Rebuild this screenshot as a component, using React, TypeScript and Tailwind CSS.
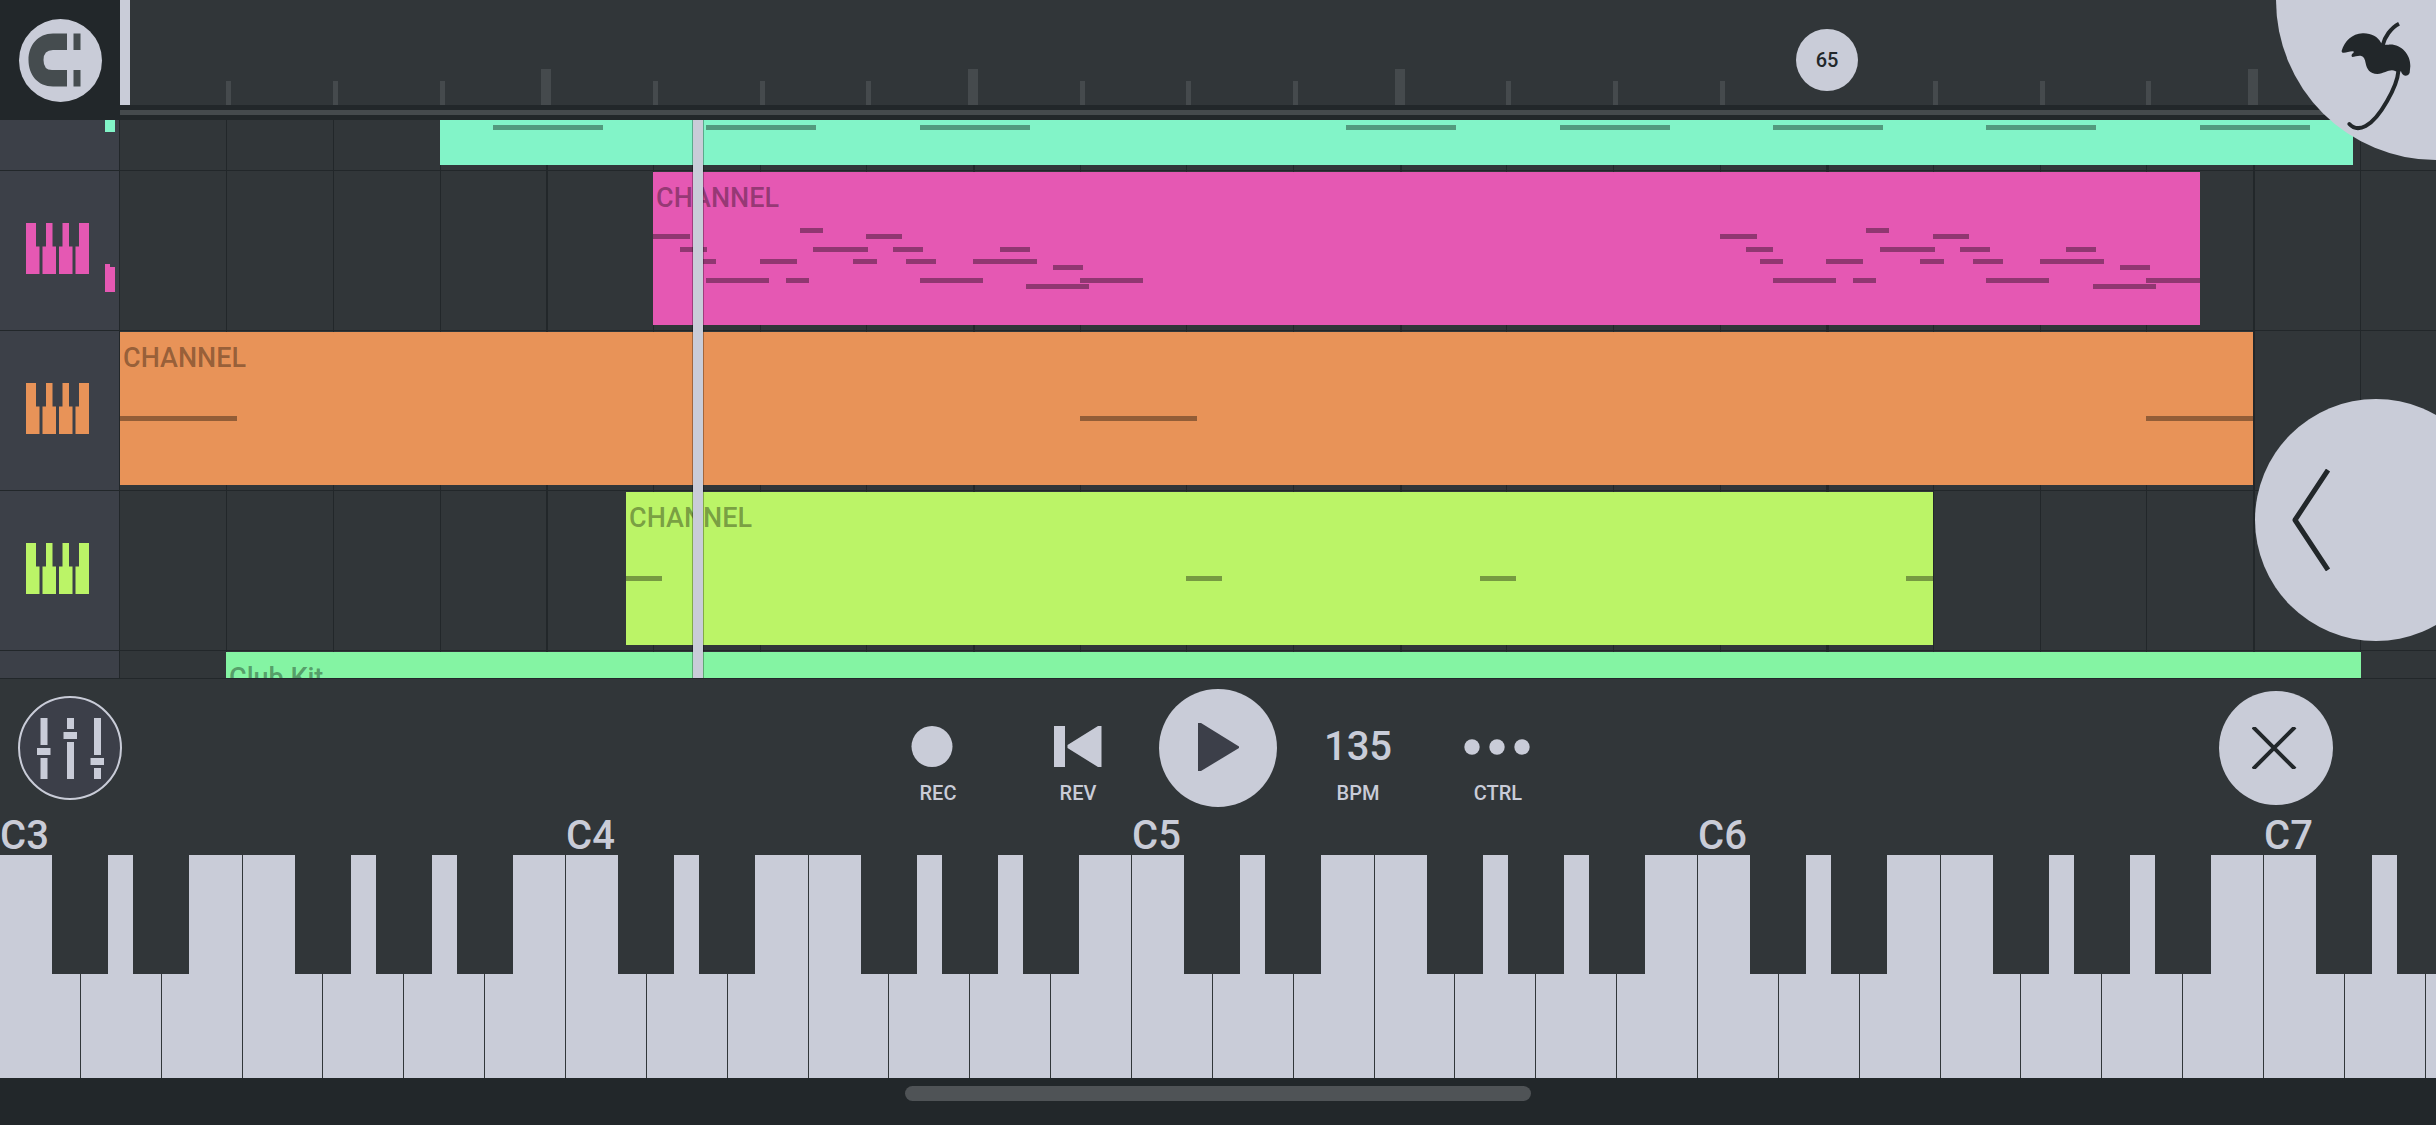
import type React from "react";
import { useState } from "react";

interface Note {
  start: number;
  length: number;
  y: number;
}

interface Clip {
  start: number;
  length: number;
  color: string;
  label?: string;
  notes: Note[];
}

interface Meter {
  left: number;
  right: number;
}

interface Track {
  id: string;
  name: string;
  iconColor?: string;
  meterColor?: string;
  meter?: Meter;
  clip: Clip;
}

// One bar is 16 steps, all clip and note times are in steps
const BAR_WIDTH = 106.67;
const BARS = 24;
const LOOP_END = 16;

const toPx = (steps: number) => Math.floor((steps / 16) * BAR_WIDTH);

const riff: Note[] = [
  { start: 0, length: 5.6, y: 62 },
  { start: 4, length: 4.1, y: 75 },
  { start: 6, length: 3.5, y: 87 },
  { start: 8, length: 9.5, y: 106 },
  { start: 16, length: 5.6, y: 87 },
  { start: 20, length: 3.5, y: 106 },
  { start: 22, length: 3.5, y: 56 },
  { start: 24, length: 8.3, y: 75 },
  { start: 30, length: 3.6, y: 87 },
  { start: 32, length: 5.5, y: 62 },
  { start: 36, length: 4.5, y: 75 },
  { start: 38, length: 4.5, y: 87 },
  { start: 40, length: 9.5, y: 106 },
  { start: 48, length: 9.6, y: 87 },
  { start: 52, length: 4.5, y: 75 },
  { start: 56, length: 9.5, y: 112 },
  { start: 60, length: 4.5, y: 93 },
  { start: 64, length: 9.5, y: 106 },
];

const tracks: Track[] = [
  {
    id: "lead",
    name: "Lead",
    meterColor: "bg-[#82f4c8]",
    meter: { left: 122, right: 122 },
    clip: {
      start: 48,
      length: 287,
      color: "bg-[#82f4c8]",
      notes: [8, 40, 72, 136, 168, 200, 232, 264].map((start) => ({
        start,
        length: 16.5,
        y: 113,
      })),
    },
  },
  {
    id: "pink",
    name: "Channel 1",
    iconColor: "text-[#e558b3]",
    meterColor: "bg-[#e558b3]",
    meter: { left: 28, right: 25 },
    clip: {
      start: 80,
      length: 232,
      color: "bg-[#e558b3]",
      label: "CHANNEL",
      notes: [
        ...riff,
        ...riff.map((note) => ({ ...note, start: note.start + 160 })),
      ],
    },
  },
  {
    id: "orange",
    name: "Channel 2",
    iconColor: "text-[#e89358]",
    clip: {
      start: 0,
      length: 320,
      color: "bg-[#e89358]",
      label: "CHANNEL",
      notes: [
        { start: 0, length: 17.6, y: 84 },
        { start: 144, length: 17.6, y: 84 },
        { start: 304, length: 17.6, y: 84 },
      ],
    },
  },
  {
    id: "lime",
    name: "Channel 3",
    iconColor: "text-[#bbf467]",
    clip: {
      start: 76,
      length: 196,
      color: "bg-[#bbf467]",
      label: "CHANNEL",
      notes: [
        { start: 0, length: 5.5, y: 84 },
        { start: 84, length: 5.5, y: 84 },
        { start: 128, length: 5.5, y: 84 },
        { start: 192, length: 5.5, y: 84 },
      ],
    },
  },
  {
    id: "club-kit",
    name: "Club Kit",
    clip: {
      start: 16,
      length: 320.2,
      color: "bg-[#84f4a3]",
      label: "Club Kit",
      notes: [],
    },
  },
];

const MagnetIcon = () => (
  <svg width="83" height="83" viewBox="0 0 83 83" fill="#454c4f">
    <path d="M48 14.5V31H34Q24.5 31 24.5 41Q24.5 51 33 51H48V67.5H34C19 67.5 9.5 56 9.5 41C9.5 26 19 14.5 34 14.5Z" />
    <rect x="54.5" y="14.5" width="7" height="16.5" />
    <rect x="54.5" y="51" width="7" height="16.5" />
  </svg>
);

const FruitIcon = () => (
  <svg width="100" height="130" viewBox="0 0 300 390">
    <path
      fill="#22272a"
      d="M35 122C44 94 66 71 98 70C123 69 143 80 153 98C158 104 166 105 176 104C212 101 242 133 241 168L239 188Q236 197 226 197Q216 196 213 184Q204 188 197 184C181 174 166 190 142 192C119 192 110 177 107 160C105 147 101 139 94 138C84 136 76 141 66 141Q63 136 66 132Q76 125 68 124C56 124 46 130 38 128Q34 126 35 122Z"
    />
    <path
      fill="none"
      stroke="#22272a"
      strokeWidth="12"
      d="M158 106C163 82 183 53 207 41"
    />
    <path
      fill="none"
      stroke="#22272a"
      strokeWidth="12"
      strokeLinecap="round"
      d="M205 184C202 226 151 325 107 348C88 358 70 355 58 342"
    />
  </svg>
);

const PianoIcon = () => (
  <svg width="63" height="51" viewBox="0 0 63 51" fill="currentColor">
    <path d="M0 0H10V23.5H13.5V51H0Z" />
    <path d="M20 0H26.5V23.5H30V51H16.5V23.5H20Z" />
    <path d="M36.5 0H43V23.5H46.5V51H33V23.5H36.5Z" />
    <path d="M53 0H63V51H49.5V23.5H53Z" />
  </svg>
);

const MixerIcon = () => (
  <svg width="67" height="61" viewBox="0 0 67 61" fill="currentColor">
    <path d="M3.500 0h7v27h-7zM0 30h13.5v7H0zM3.500 40h7v21h-7z" />
    <path d="M30 0h7v11h-7zM26.500 14h13.5v7h-13.5zM30 24h7v37h-7z" />
    <path d="M57 0h7v37h-7zM53.500 40h13.5v7h-13.5zM57 50h7v11h-7z" />
  </svg>
);

const PlayIcon = () => (
  <svg width="42" height="52" viewBox="0 0 42 52" fill="#3c3f49">
    <path d="M1 1H4L42 24.5V26L4 49H1Z" />
  </svg>
);

const RecIcon = () => (
  <svg width="54" height="42" viewBox="0 0 54 42" fill="currentColor">
    <circle cx="21" cy="20.5" r="20.5" />
  </svg>
);

const RewindIcon = () => (
  <svg width="48" height="42" viewBox="0 0 48 42" fill="currentColor">
    <path d="M0 0H11V41H0ZM44 0H47.5V41H44L13.5 22V19Z" />
  </svg>
);

const DotsIcon = () => (
  <svg width="68" height="16" viewBox="0 0 68 16" fill="currentColor">
    <circle cx="8" cy="8" r="7.7" />
    <circle cx="33" cy="8" r="7.7" />
    <circle cx="58" cy="8" r="7.7" />
  </svg>
);

const Ruler = () => (
  <div className="flex-1 min-w-0">
    <div className="relative h-[105px] bg-[#313639] overflow-hidden">
      {Array.from({ length: BARS - 1 }, (_, i) => i + 1)
        .filter((bar) => bar !== LOOP_END)
        .map((bar) => (
          <span
            key={bar}
            className={`absolute bottom-0 bg-[#454a4d] ${
              bar % 4 === 0 ? "w-2.5 h-9 -ml-[5px]" : "w-[5px] h-6"
            }`}
            style={{ left: toPx(bar * 16) }}
          />
        ))}
      <span className="absolute left-0 top-0 w-2.5 h-full bg-[#c9ccd8]" />
      {/* Loop end marker */}
      <span
        className="absolute top-[29px] w-[62px] h-[62px] -ml-[30px] rounded-full bg-[#c9ccd8] text-[#22272a] text-[20px] font-medium flex items-center justify-center"
        style={{ left: toPx(LOOP_END * 16) }}
      >
        65
      </span>
    </div>
    <div className="mt-[5px] h-[5px] bg-[#454a4d]" />
  </div>
);

const GridLines = () => (
  <div className="absolute inset-y-0 left-[120px] right-0 overflow-hidden">
    {Array.from({ length: BARS - 1 }, (_, i) => i + 1).map((bar) => (
      <span
        key={bar}
        className={`absolute inset-y-0 bg-[#22272a] ${
          bar % 16 === 0 ? "w-[3px]" : bar % 4 === 0 ? "w-0.5" : "w-px"
        }`}
        style={{ left: toPx(bar * 16) }}
      />
    ))}
  </div>
);

const ClipBlock: React.FC<{ clip: Clip }> = ({ clip }) => {
  const left = toPx(clip.start);
  const right = toPx(clip.start + clip.length);

  return (
    <div
      className={`absolute top-px h-[153px] overflow-hidden ${clip.color}`}
      style={{ left, width: right - left }}
    >
      {clip.label && (
        <p className="pt-2 pl-[3px] text-[27px] leading-9 font-medium text-black/37 whitespace-nowrap">
          {clip.label}
        </p>
      )}
      {clip.notes.map((note) => (
        <span
          key={`${note.start}-${note.y}`}
          className="absolute h-[5px] bg-black/37"
          style={{
            left: toPx(clip.start + note.start) - left,
            top: note.y,
            width: toPx(note.length),
          }}
        />
      ))}
    </div>
  );
};

const TrackRow: React.FC<{ track: Track }> = ({ track }) => (
  <div className="relative flex h-40 border-t border-[#22272a]">
    <button
      type="button"
      aria-label={track.name}
      className={`relative flex-none w-[120px] pl-[26px] pb-1 bg-[#3c4048] border-r border-[#22272a] flex items-center ${track.iconColor ?? ""}`}
    >
      {track.iconColor && <PianoIcon />}
      {track.meter && (
        <span className="absolute left-[105px] bottom-[38px] flex items-end">
          <span
            className={`w-[5px] ${track.meterColor}`}
            style={{ height: track.meter.left }}
          />
          <span
            className={`w-[5px] ${track.meterColor}`}
            style={{ height: track.meter.right }}
          />
        </span>
      )}
    </button>
    <div className="relative flex-1 min-w-0 overflow-hidden">
      <ClipBlock clip={track.clip} />
    </div>
  </div>
);

interface TransportButtonProps {
  label: string;
  onClick?: () => void;
  children: React.ReactNode;
}

const TransportButton: React.FC<TransportButtonProps> = ({
  label,
  onClick,
  children,
}) => (
  <button
    type="button"
    onClick={onClick}
    className="w-[140px] pt-7 flex flex-col items-center gap-1 font-medium"
  >
    <span className="h-[60px] flex items-center justify-center">
      {children}
    </span>
    <span className="text-[20px] leading-6">{label}</span>
  </button>
);

// Left edges of the black keys inside one octave
const blackKeys = [
  { note: "C#", position: "left-[9.2%]" },
  { note: "D#", position: "left-[23.5%]" },
  { note: "F#", position: "left-[52.1%]" },
  { note: "G#", position: "left-[66.4%]" },
  { note: "A#", position: "left-[80.7%]" },
];
const whiteKeys = ["C", "D", "E", "F", "G", "A", "B"];
const octaves = [3, 4, 5, 6, 7];

const Keyboard = () => (
  <div className="flex overflow-x-clip">
    {octaves.map((octave) => (
      <div key={octave} className="flex-none w-[23.235%]">
        <p className="text-[40px] leading-[38px] font-medium">C{octave}</p>
        <div className="relative flex h-[223px]">
          {whiteKeys.map((note) => (
            <button
              key={note}
              type="button"
              aria-label={`${note}${octave}`}
              className="flex-1 bg-[#c9ccd8] border-r border-[#313639]"
            />
          ))}
          {blackKeys.map(({ note, position }) => (
            <button
              key={note}
              type="button"
              aria-label={`${note}${octave}`}
              className={`absolute top-0 h-[119px] w-[9.9%] bg-[#313639] ${position}`}
            />
          ))}
        </div>
      </div>
    ))}
  </div>
);

export default function App() {
  const [playing, setPlaying] = useState(false);
  const [snap, setSnap] = useState(true);

  return (
    <div className="relative min-h-screen flex flex-col bg-[#22272a] text-[#c9ccd8] font-['Roboto',sans-serif] overflow-hidden">
      <header className="flex h-[120px]">
        <div className="flex-none w-[120px] flex items-center justify-center">
          <button
            type="button"
            aria-label="Snap"
            aria-pressed={snap}
            onClick={() => setSnap(!snap)}
            className="rounded-full bg-[#c9ccd8]"
          >
            <MagnetIcon />
          </button>
        </div>
        <Ruler />
      </header>

      <main className="relative h-[558px] overflow-hidden bg-[#313639]">
        <GridLines />
        {/* First track is partly scrolled out of view */}
        <div className="-mt-[110px]">
          {tracks.map((track) => (
            <TrackRow key={track.id} track={track} />
          ))}
        </div>
        {/* Playhead */}
        <div className="absolute inset-y-0 left-[692px] w-3 bg-[#c9ccd8] bg-clip-padding border-x border-black/30" />
        <button
          type="button"
          aria-label="Open panel"
          className="absolute top-[279px] -right-[61px] w-[242px] h-[242px] pl-9 rounded-full bg-[#c9ccd8]"
        >
          <svg
            width="40"
            height="102"
            viewBox="0 0 40 102"
            fill="none"
            stroke="#22272a"
            strokeWidth="5"
            strokeLinejoin="round"
          >
            <path d="M37 1L4 51L37 101" />
          </svg>
        </button>
      </main>

      <section className="border-t border-[#22272a] bg-[#313639]">
        <div className="grid grid-cols-[1fr_auto_1fr] items-center h-[138px]">
          <button
            type="button"
            aria-label="Mixer"
            className="ml-[18px] w-[104px] h-[104px] rounded-full border-2 border-[#c9ccd8] bg-[#3c3f49] flex items-center justify-center"
          >
            <MixerIcon />
          </button>
          <div className="flex h-[118px] items-start">
            <TransportButton label="REC">
              <RecIcon />
            </TransportButton>
            <TransportButton label="REV">
              <RewindIcon />
            </TransportButton>
            <div className="w-[140px] flex justify-center">
              <button
                type="button"
                aria-label={playing ? "Stop" : "Play"}
                onClick={() => setPlaying(!playing)}
                className="w-[118px] h-[118px] rounded-full bg-[#c9ccd8] flex items-center justify-center"
              >
                <PlayIcon />
              </button>
            </div>
            <TransportButton label="BPM">
              <span className="text-[40px]">135</span>
            </TransportButton>
            <TransportButton label="CTRL">
              <DotsIcon />
            </TransportButton>
          </div>
          <button
            type="button"
            aria-label="Close keyboard"
            className="justify-self-end mr-[103px] w-[114px] h-[114px] rounded-full bg-[#c9ccd8] flex items-center justify-center"
          >
            <svg
              width="48"
              height="42"
              viewBox="0 0 48 42"
              stroke="#22272a"
              strokeWidth="4"
            >
              <path d="M1 0L43 42M43 0L1 42" />
            </svg>
          </button>
        </div>
        <Keyboard />
      </section>

      {/* Home indicator */}
      <footer className="flex justify-center pt-2 pb-6">
        <div className="w-[25.7%] h-[15px] rounded-full bg-[#4f5356]" />
      </footer>

      <button
        type="button"
        aria-label="Menu"
        className="absolute top-0 right-0 w-40 h-40 pt-2.5 pr-1.5 rounded-bl-full bg-[#c9ccd8] flex items-start justify-end"
      >
        <FruitIcon />
      </button>
    </div>
  );
}
